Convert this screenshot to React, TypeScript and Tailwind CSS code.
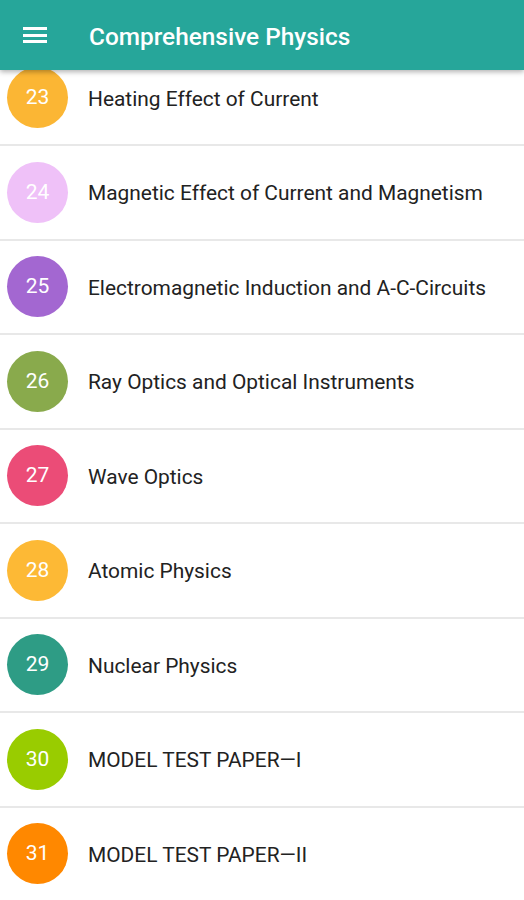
import React from 'react';

type Chapter = { no: number; title: string; color: string };

const chapters: Chapter[] = [
  { no: 23, title: 'Heating Effect of Current', color: 'bg-[#fbb634]' },
  { no: 24, title: 'Magnetic Effect of Current and Magnetism', color: 'bg-[#efc1f8]' },
  { no: 25, title: 'Electromagnetic Induction and A-C-Circuits', color: 'bg-[#a367d1]' },
  { no: 26, title: 'Ray Optics and Optical Instruments', color: 'bg-[#89aa4c]' },
  { no: 27, title: 'Wave Optics', color: 'bg-[#eb4c77]' },
  { no: 28, title: 'Atomic Physics', color: 'bg-[#fdb935]' },
  { no: 29, title: 'Nuclear Physics', color: 'bg-[#2e9c85]' },
  { no: 30, title: 'MODEL TEST PAPER—I', color: 'bg-[#99cc00]' },
  { no: 31, title: 'MODEL TEST PAPER—II', color: 'bg-[#ff8800]' },
];

const App = () => {
  return (
    <div className="relative h-[900px] w-[524px] overflow-hidden bg-white font-['Roboto',sans-serif]">
      <header className="absolute inset-x-0 top-0 z-10 flex h-[70px] items-center bg-[#26a69a] shadow-[0_2px_5px_rgba(0,0,0,0.3)]">
        <div className="ml-[23px] flex w-6 flex-col gap-[3.5px]">
          <span className="h-[3px] bg-white" />
          <span className="h-[3px] bg-white" />
          <span className="h-[3px] bg-white" />
        </div>
        <h1 className="ml-[42px] pt-[4px] text-[24.4px] font-medium text-white">
          Comprehensive Physics
        </h1>
      </header>

      <ul className="mt-[49.5px]">
        {chapters.map((c) => (
          <li
            key={c.no}
            className="flex h-[94.5px] items-center border-t-2 border-[#e8e8e8]"
          >
            <div
              className={`ml-[7px] flex h-[61px] w-[61px] shrink-0 items-center justify-center rounded-full ${c.color} text-[21px] text-white`}
            >
              {c.no}
            </div>
            <span className="ml-[20px] pt-[3px] text-[20.9px] text-[#222]">{c.title}</span>
          </li>
        ))}
      </ul>
    </div>
  );
};

export default App;
